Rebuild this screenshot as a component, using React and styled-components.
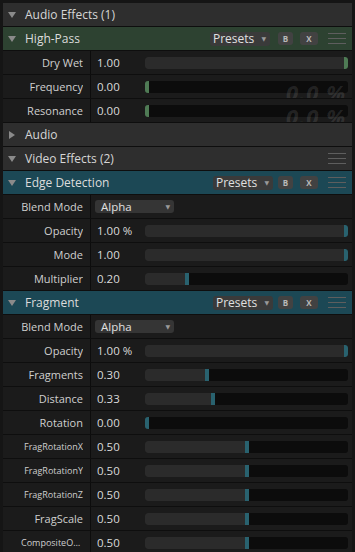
import React from "react";
import styled, { createGlobalStyle } from "styled-components";

const GlobalStyle = createGlobalStyle`
  html, body {
    margin: 0;
    padding: 0;
    background: #151515;
  }
  body {
    font-family: "Open Sans", "DejaVu Sans", sans-serif;
    -webkit-font-smoothing: antialiased;
  }
`;

const ACCENTS = {
  audio: { header: "#2d4231", thumb: "#4f7b55" },
  video: { header: "#1c4855", thumb: "#29626f" }
};

const Panel = styled.div`
  width: 349px;
  height: 549px;
  overflow: hidden;
  border-top: 3px solid #151515;
  border-left: 3px solid #151515;
  border-right: 3px solid #151515;
  background: #151515;
`;

const Row = styled.div`
  height: 23px;
  border-bottom: 1px solid #0e0e0e;
  display: flex;
  align-items: center;
  box-sizing: content-box;
`;

const SectionHeader = styled(Row)`
  background: #2e2e2e;
  padding: 0 6px 0 5px;
  color: #d6d6d6;
  font-size: 12px;
`;

const EffectHeader = styled(Row)`
  background: ${p => ACCENTS[p.$kind].header};
  padding: 0 6px 0 5px;
  color: #dcdcdc;
  font-size: 12px;
`;

const Caret = styled.span`
  width: 8px;
  margin-right: 9px;
  display: flex;
  align-items: center;
  justify-content: center;
  &::before {
    content: "";
    display: block;
    border-style: solid;
    ${p =>
      p.$open
        ? `border-width: 6px 4px 0 4px; border-color: #8a8a8a transparent transparent transparent;`
        : `border-width: 4px 0 4px 6px; border-color: transparent transparent transparent #8a8a8a;`}
  }
`;

const Title = styled.span`
  flex: 1;
  white-space: nowrap;
`;

const PresetSelect = styled.div`
  width: 57px;
  height: 14px;
  margin-right: ${p => p.$gap}px;
  padding-left: 3px;
  background: #3a3a3a;
  border-radius: 3px;
  display: flex;
  align-items: center;
  justify-content: space-between;
  font-size: 12px;
  color: #e0e0e0;
  line-height: 14px;
`;

const SelectArrow = styled.span`
  font-size: 6px;
  color: #9a9a9a;
  margin-right: 4px;
`;

const SmallButton = styled.div`
  width: ${p => p.$w}px;
  height: 13px;
  margin-right: ${p => p.$gap}px;
  background: #424242;
  border-radius: 3px;
  display: flex;
  align-items: center;
  justify-content: center;
  font-size: 8px;
  font-weight: bold;
  color: #b8b8b8;
`;

const Grip = styled.div`
  width: 18px;
  height: 11px;
  display: flex;
  flex-direction: column;
  justify-content: space-between;
  & > span {
    display: block;
    height: 1px;
    background: #5e5e5e;
  }
`;

const ParamRow = styled(Row)`
  background: #1b1b1b;
  position: relative;
  overflow: hidden;
`;

const Label = styled.div`
  width: 80px;
  padding-right: 7px;
  height: 100%;
  border-right: 1px solid #0c0c0c;
  display: flex;
  align-items: center;
  justify-content: flex-end;
  font-size: ${p => (p.$small ? "9px" : "11px")};
  color: #cfcfcf;
  white-space: nowrap;
  overflow: hidden;
  & > span {
    overflow: hidden;
    text-overflow: ellipsis;
    max-width: ${p => (p.$clip ? "62px" : "80px")};
  }
`;

const Value = styled.div`
  width: 48px;
  padding-left: 6px;
  font-size: 11.5px;
  color: #dadada;
  white-space: nowrap;
`;

const Slider = styled.div`
  position: relative;
  width: 203px;
  height: 12px;
  border-radius: 3px;
  background: #0c0c0c;
  overflow: hidden;
`;

const SliderFill = styled.div`
  height: 100%;
  background: #2b2b2b;
`;

const Thumb = styled.div`
  position: absolute;
  top: 0;
  width: 4px;
  height: 100%;
  background: ${p => ACCENTS[p.$kind].thumb};
`;

const Ghost = styled.div`
  position: absolute;
  right: 6px;
  top: 6px;
  line-height: 1;
  font-size: 22px;
  font-weight: bold;
  font-style: italic;
  color: rgba(255, 255, 255, 0.11);
  letter-spacing: 1px;
  pointer-events: none;
`;

const BlendSelect = styled.div`
  width: 73px;
  height: 13px;
  margin-left: -2px;
  padding-left: 6px;
  background: #353535;
  border-radius: 3px;
  display: flex;
  align-items: center;
  justify-content: space-between;
  font-size: 11.5px;
  color: #e0e0e0;
`;

const Header = ({ title, open = true, kind, grip }) => {
  if (!kind) {
    return (
      <SectionHeader>
        <Caret $open={open} />
        <Title>{title}</Title>
        {grip ? (
          <Grip>
            <span />
            <span />
            <span />
          </Grip>
        ) : null}
      </SectionHeader>
    );
  }
  return (
    <EffectHeader $kind={kind}>
      <Caret $open={open} />
      <Title>{title}</Title>
      <PresetSelect $gap={kind === "audio" ? 8 : 5}>
        Presets<SelectArrow>▼</SelectArrow>
      </PresetSelect>
      <SmallButton $w={15} $gap={7}>
        B
      </SmallButton>
      <SmallButton $w={18} $gap={10}>
        X
      </SmallButton>
      <Grip>
        <span />
        <span />
        <span />
      </Grip>
    </EffectHeader>
  );
};

const Param = ({ label, value, pct, kind, ghost, small, clip }) => (
  <ParamRow>
    <Label $small={small} $clip={clip}>
      <span>{label}</span>
    </Label>
    <Value>{value}</Value>
    <Slider>
      <SliderFill style={{ width: `${pct * 199 + 2}px` }} />
      <Thumb $kind={kind} style={{ left: `${pct * 199}px` }} />
    </Slider>
    {ghost ? <Ghost>0.0 %</Ghost> : null}
  </ParamRow>
);

const Blend = () => (
  <ParamRow>
    <Label>
      <span>Blend Mode</span>
    </Label>
    <Value>
      <BlendSelect>
        Alpha<SelectArrow>▼</SelectArrow>
      </BlendSelect>
    </Value>
  </ParamRow>
);

const fragmentParams = [
  ["Fragments", "0.30", 0.3],
  ["Distance", "0.33", 0.33],
  ["Rotation", "0.00", 0],
  ["FragRotationX", "0.50", 0.5, true],
  ["FragRotationY", "0.50", 0.5, true],
  ["FragRotationZ", "0.50", 0.5, true],
  ["FragScale", "0.50", 0.5],
  ["CompositeOperation", "0.50", 0.5, true, true]
];

export default function App() {
  return (
    <>
      <GlobalStyle />
      <Panel>
        <Header title="Audio Effects (1)" />
        <Header title="High-Pass" kind="audio" />
        <Param label="Dry Wet" value="1.00" pct={1} kind="audio" />
        <Param label="Frequency" value="0.00" pct={0} kind="audio" ghost />
        <Param label="Resonance" value="0.00" pct={0} kind="audio" ghost />
        <Header title="Audio" open={false} />
        <Header title="Video Effects (2)" grip />
        <Header title="Edge Detection" kind="video" />
        <Blend />
        <Param label="Opacity" value="1.00 %" pct={1} kind="video" />
        <Param label="Mode" value="1.00" pct={1} kind="video" />
        <Param label="Multiplier" value="0.20" pct={0.2} kind="video" />
        <Header title="Fragment" kind="video" />
        <Blend />
        <Param label="Opacity" value="1.00 %" pct={1} kind="video" />
        {fragmentParams.map(([label, value, pct, small, clip]) => (
          <Param
            key={label}
            label={label}
            value={value}
            pct={pct}
            kind="video"
            small={small}
            clip={clip}
          />
        ))}
      </Panel>
    </>
  );
}
